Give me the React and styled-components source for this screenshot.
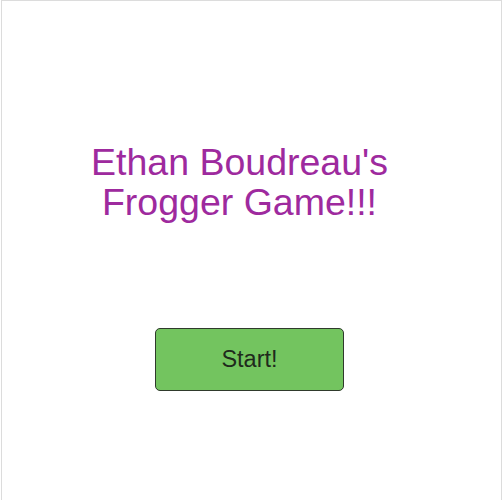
import styled, { createGlobalStyle } from "styled-components";

const GlobalStyle = createGlobalStyle`
  html, body {
    margin: 0;
    padding: 0;
    background: #ffffff;
  }
`;

const Frame = styled.div`
  box-sizing: border-box;
  width: 501px;
  height: 500px;
  margin-left: 1px;
  border: 1px solid #dcdcdc;
  border-bottom: none;
  display: flex;
  flex-direction: column;
  align-items: center;
  font-family: "Liberation Sans", Arial, sans-serif;
`;

const Title = styled.h1`
  margin: 141px 24px 0 0;
  width: 330px;
  font-size: 37.5px;
  font-weight: normal;
  line-height: 40px;
  text-align: center;
  color: #9e2a9e;
`;

const StartButton = styled.button`
  box-sizing: border-box;
  margin: 106px 4px 0 0;
  width: 189px;
  height: 63px;
  background: #73c45f;
  border: 1px solid #2f3a2c;
  border-radius: 5px;
  font-family: "Liberation Sans", Arial, sans-serif;
  font-size: 23.5px;
  color: #1f2a1c;
  cursor: pointer;
`;

const App = () => {
  return (
    <Frame>
      <GlobalStyle />
      <Title>Ethan Boudreau's Frogger Game!!!</Title>
      <StartButton>Start!</StartButton>
    </Frame>
  );
};

export default App;
